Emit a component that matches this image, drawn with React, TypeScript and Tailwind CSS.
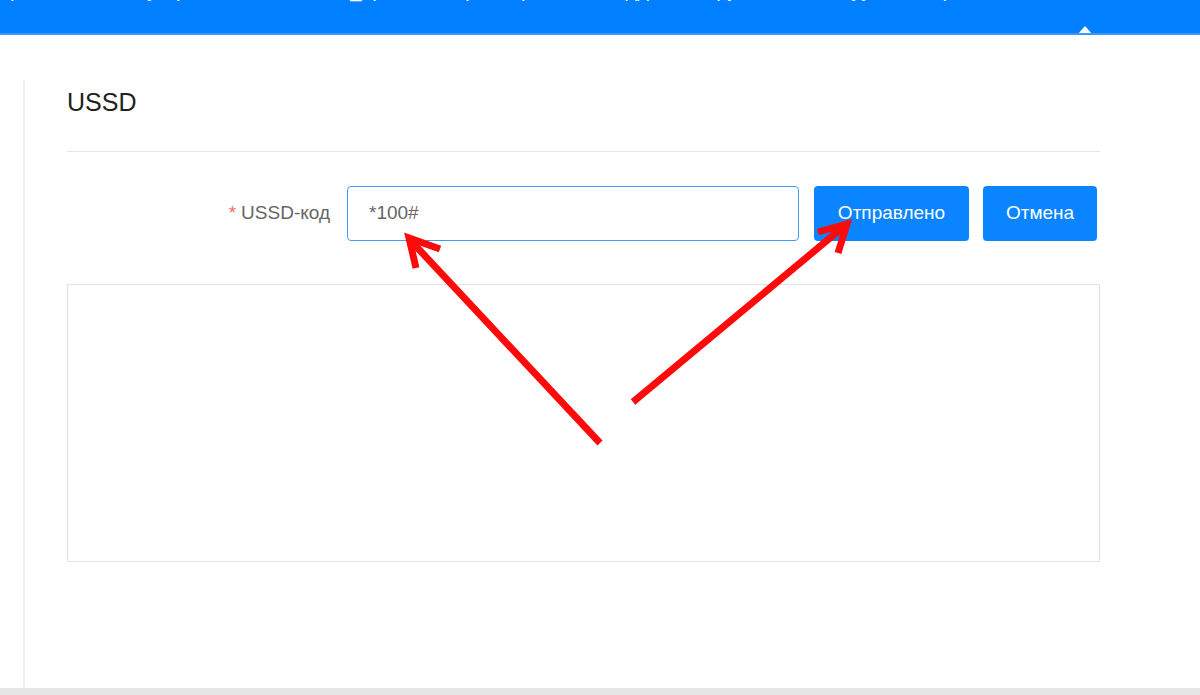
import React from "react";

function Arrows() {
  return (
    <svg
      className="pointer-events-none absolute left-0 top-0"
      width={1200}
      height={695}
      viewBox="0 0 1200 695"
      fill="none"
      stroke="#ff0a0a"
      strokeWidth={7}
      strokeLinecap="butt"
      strokeLinejoin="miter"
    >
      {/* arrow pointing at the input */}
      <path d="M600 443 L412 242" />
      <path d="M440 249 L409 238 L416 268" />
      {/* arrow pointing at the send button */}
      <path d="M633 402 L842 228" />
      <path d="M818 232 L847 224 L838 253" />
    </svg>
  );
}

export default function App() {
  return (
    <div
      className="relative h-[695px] w-[1200px] overflow-hidden bg-white"
      style={{ fontFamily: '"Liberation Sans", Arial, sans-serif' }}
    >
      {/* top navigation bar */}
      <div className="relative h-[35px] overflow-hidden border-b-2 border-[#3a96ff] bg-[#0080ff]">
        <div className="-mt-[20px] flex gap-[60px] whitespace-nowrap pl-[10px] text-[20px] leading-[20px] text-white">
          <span>рабочий</span>
          <span>устройство</span>
          <span>сеть_пр</span>
          <span>параметры</span>
          <span>отдд</span>
          <span>группа</span>
          <span>слуу</span>
          <span>пр</span>
        </div>
        <div className="absolute bottom-[-2px] left-[1077px] h-0 w-0 border-x-[8px] border-b-[9px] border-x-transparent border-b-white" />
      </div>

      <div className="flex h-[653px]">
        <div className="mt-[45px] w-[25px] border-r-2 border-[#f0f0f0]" />
        <div className="flex w-[1075px] flex-col pl-[42px]">
          <div className="pt-[53px] text-[25px] leading-[28px] text-[#222]">USSD</div>
          <div className="mt-[35px] h-px w-[1033px] bg-[#e4e4e4]" />

          <div className="mt-[34px] flex h-[55px] items-center">
            <label className="w-[280px] pr-[17px] text-right text-[19px] text-[#666]">
              <span className="mr-[5px] text-[#f56c6c]">*</span>USSD-код
            </label>
            <div className="flex h-[55px] w-[452px] items-center rounded-[4px] border border-[#409eff] pl-[21px] text-[19px] text-[#666]">
              *100#
            </div>
            <button className="ml-[15px] h-[55px] w-[155px] rounded-[4px] bg-[#0a84ff] text-[19px] text-white">
              Отправлено
            </button>
            <button className="ml-[14px] h-[55px] w-[114px] rounded-[4px] bg-[#0a84ff] text-[19px] text-white">
              Отмена
            </button>
          </div>

          <div className="mt-[43px] h-[278px] w-[1033px] border border-[#e2e2e2]" />
        </div>
      </div>

      <div className="h-[7px] bg-[#e6e6e6]" />

      <Arrows />
    </div>
  );
}
